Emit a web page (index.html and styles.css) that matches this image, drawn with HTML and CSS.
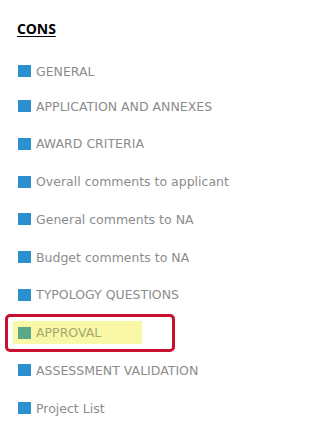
FILE: index.html
```html
<!DOCTYPE html>
<html>
<head>
<meta charset="utf-8">
<link rel="stylesheet" href="styles.css">
</head>
<body>
<div class="panel">
  <h2 class="title">CONS</h2>
  <ul class="menu">
    <li class="item"><span class="sq"></span><span class="lbl">GENERAL</span></li>
    <li class="item"><span class="sq"></span><span class="lbl">APPLICATION AND ANNEXES</span></li>
    <li class="item"><span class="sq"></span><span class="lbl">AWARD CRITERIA</span></li>
    <li class="item"><span class="sq"></span><span class="lbl">Overall comments to applicant</span></li>
    <li class="item"><span class="sq"></span><span class="lbl">General comments to NA</span></li>
    <li class="item"><span class="sq"></span><span class="lbl">Budget comments to NA</span></li>
    <li class="item"><span class="sq"></span><span class="lbl">TYPOLOGY QUESTIONS</span></li>
    <li class="item active">
      <span class="frame"></span>
      <span class="hl"><span class="sq green"></span><span class="lbl">APPROVAL</span></span>
    </li>
    <li class="item"><span class="sq"></span><span class="lbl">ASSESSMENT VALIDATION</span></li>
    <li class="item"><span class="sq"></span><span class="lbl">Project List</span></li>
  </ul>
</div>
</body>
</html>
```
FILE: styles.css
```css
html, body {
  margin: 0;
  padding: 0;
  background: #ffffff;
}
body {
  font-family: "DejaVu Sans", Tahoma, sans-serif;
}
.panel {
  padding: 20px 0 0 17px;
}
.title {
  margin: 0;
  font-family: "Open Sans", "DejaVu Sans", sans-serif;
  font-weight: 700;
  font-size: 14px;
  line-height: 18px;
  color: #000;
  text-decoration: underline;
  text-underline-offset: 2px;
  letter-spacing: -0.1px;
}
.menu {
  list-style: none;
  margin: 17px 0 0 0;
  padding: 0;
}
.item {
  position: relative;
  display: flex;
  align-items: center;
  height: 37.75px;
  font-size: 12.5px;
  color: #8c8c8c;
}
.item:first-child {
  height: 32.25px;
}
.sq {
  width: 13px;
  height: 12px;
  background: #2c8fce;
  margin-left: 1px;
  margin-right: 5px;
  flex: none;
}
.sq.green {
  background: #5aa98a;
}
.lbl {
  white-space: nowrap;
}
.hl {
  display: flex;
  align-items: center;
  box-sizing: border-box;
  width: 129px;
  height: 23px;
  background: #f8f8a6;
  margin-left: -4px;
  padding-left: 4px;
}
.active .lbl {
  color: #a4a86c;
}
.frame {
  position: absolute;
  left: -12px;
  top: 0;
  width: 170px;
  height: 38.5px;
  border: 3px solid #c8102e;
  border-radius: 5px;
  box-sizing: border-box;
}
```
